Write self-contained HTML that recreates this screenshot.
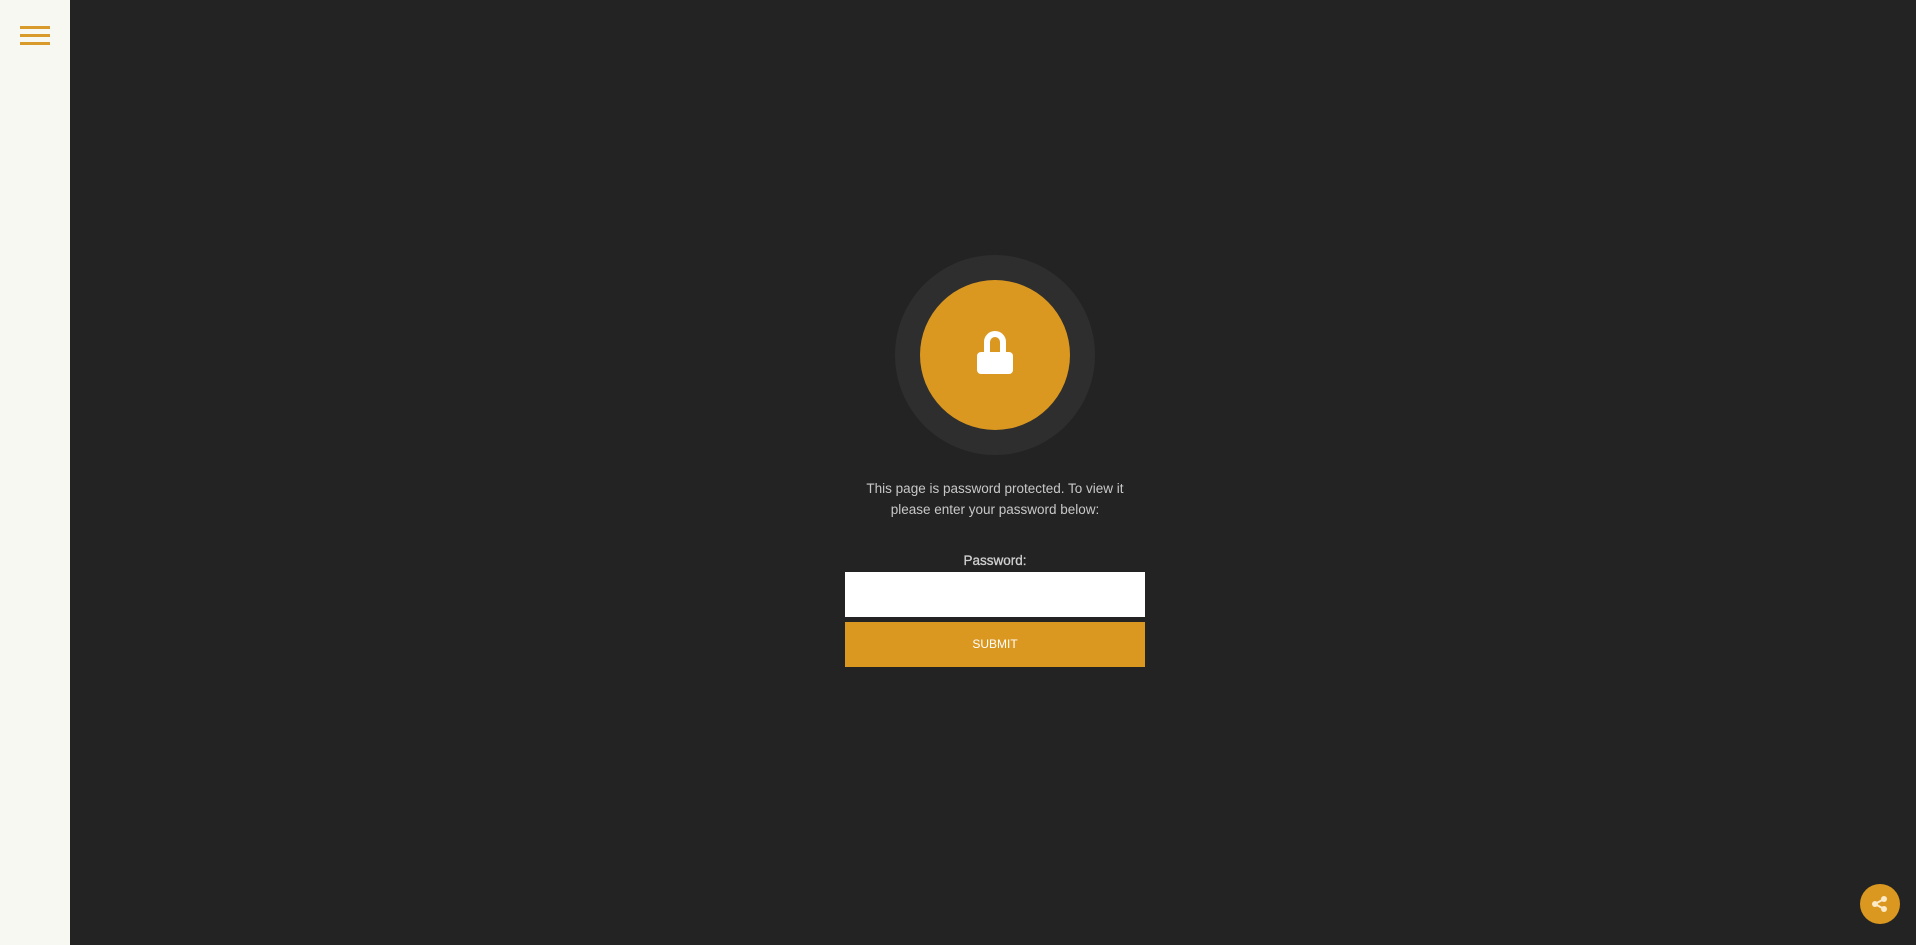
<!DOCTYPE html>
<html><head><style>
html,body{margin:0;padding:0;width:1916px;height:945px;overflow:hidden;background:#232323;font-family:"Liberation Sans",sans-serif}
.side{position:absolute;left:0;top:0;width:70px;height:945px;background:#f8f8f3}
.bar{position:absolute;left:20px;width:30px;height:3px;background:#d89a2a}
.outer{position:absolute;left:895px;top:255px;width:200px;height:200px;border-radius:50%;background:#2e2e2e}
.inner{position:absolute;left:920px;top:280px;width:150px;height:150px;border-radius:50%;background:#db9820}
.txt{position:absolute;left:795px;width:400px;text-align:center;color:#c8c8c8;font-size:13.5px;line-height:21px;top:478px}
.lbl{position:absolute;left:845px;width:300px;text-align:center;color:#d0d0d0;font-size:13.5px;top:553px;font-weight:normal;-webkit-text-stroke:0.3px #d0d0d0}
.inp{position:absolute;left:845px;top:572px;width:300px;height:45px;background:#fff}
.btn{position:absolute;left:845px;top:622px;width:300px;height:45px;background:#db9820;color:#fff;font-size:12px;text-align:center;line-height:45px}
.share{position:absolute;left:1860px;top:884px;width:40px;height:40px;border-radius:50%;background:#db9820}
</style></head><body>
<div class="side"><div class="bar" style="top:26px"></div><div class="bar" style="top:34px"></div><div class="bar" style="top:42px"></div></div>
<div class="outer"></div><div class="inner"></div>
<svg style="position:absolute;left:975px;top:328px" width="40" height="48" viewBox="0 0 40 48">
<path d="M12 25 V14 A8 8 0 0 1 28 14 V25" fill="none" stroke="#fff" stroke-width="6"/>
<rect x="2" y="24" width="36" height="22" rx="4" fill="#fff"/></svg>
<div class="txt">This page is password protected. To view it<br>please enter your password below:</div>
<div class="lbl">Password:</div>
<div class="inp"></div>
<div class="btn">SUBMIT</div>
<div class="share"><svg width="40" height="40" viewBox="0 0 40 40"><g fill="#fbe9c8"><circle cx="15" cy="20" r="3"/><circle cx="24" cy="15" r="3"/><circle cx="24" cy="25" r="3"/></g><path d="M15 20 L24 15 M15 20 L24 25" stroke="#fbe9c8" stroke-width="2"/></svg></div>
</body></html>
